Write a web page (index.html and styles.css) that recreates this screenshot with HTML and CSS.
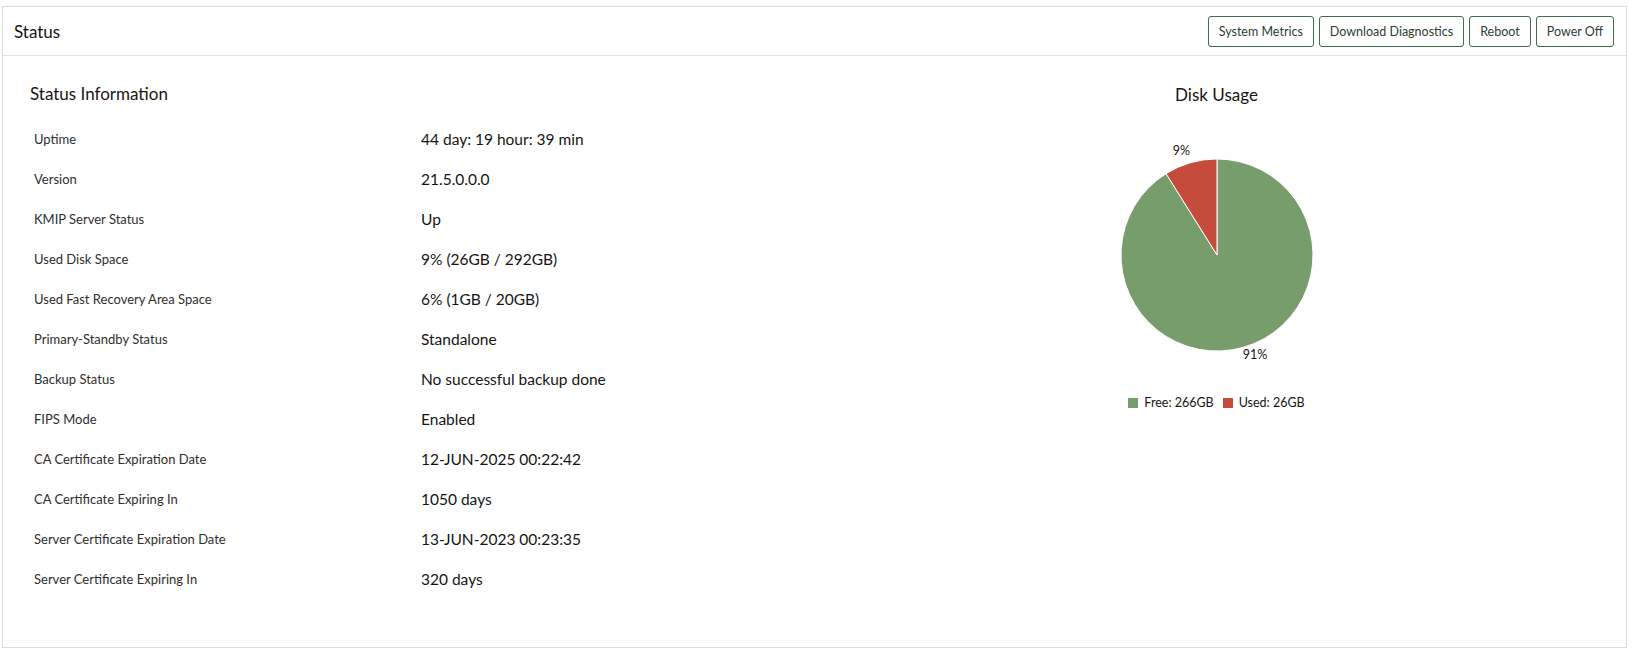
FILE: index.html
```html
<!DOCTYPE html>
<html>
<head>
<meta charset="utf-8">
<link rel="stylesheet" href="styles.css">
</head>
<body>
<div class="panel">
  <div class="panel-header">
    <div class="panel-title">Status</div>
    <div class="actions">
      <button class="btn">System Metrics</button>
      <button class="btn">Download Diagnostics</button>
      <button class="btn">Reboot</button>
      <button class="btn">Power Off</button>
    </div>
  </div>
  <div class="panel-body">
    <div class="info">
      <h2 class="section-title">Status Information</h2>
      <div class="rows">
        <div class="row"><span class="label">Uptime</span><span class="value">44 day: 19 hour: 39 min</span></div>
        <div class="row"><span class="label">Version</span><span class="value">21.5.0.0.0</span></div>
        <div class="row"><span class="label">KMIP Server Status</span><span class="value">Up</span></div>
        <div class="row"><span class="label">Used Disk Space</span><span class="value">9% (26GB / 292GB)</span></div>
        <div class="row"><span class="label">Used Fast Recovery Area Space</span><span class="value">6% (1GB / 20GB)</span></div>
        <div class="row"><span class="label">Primary-Standby Status</span><span class="value">Standalone</span></div>
        <div class="row"><span class="label">Backup Status</span><span class="value">No successful backup done</span></div>
        <div class="row"><span class="label">FIPS Mode</span><span class="value">Enabled</span></div>
        <div class="row"><span class="label">CA Certificate Expiration Date</span><span class="value">12-JUN-2025 00:22:42</span></div>
        <div class="row"><span class="label">CA Certificate Expiring In</span><span class="value">1050 days</span></div>
        <div class="row"><span class="label">Server Certificate Expiration Date</span><span class="value">13-JUN-2023 00:23:35</span></div>
        <div class="row"><span class="label">Server Certificate Expiring In</span><span class="value">320 days</span></div>
      </div>
    </div>
    <div class="chart">
      <h2 class="chart-title">Disk Usage</h2>
      <svg class="pie" width="260" height="235" viewBox="0 0 260 235">
        <path d="M130 120 L130 24 A96 96 0 1 1 79.06 38.63 Z" fill="#769d6b" stroke="#ffffff" stroke-width="1"/>
        <path d="M130 120 L79.06 38.63 A96 96 0 0 1 130 24 Z" fill="#c54b3c" stroke="#ffffff" stroke-width="1"/>
        <text x="94.5" y="20" class="pie-label" text-anchor="middle">9%</text>
        <text x="168" y="224" class="pie-label" text-anchor="middle">91%</text>
      </svg>
      <div class="legend">
        <span class="legend-item"><span class="swatch free"></span>Free: 266GB</span>
        <span class="legend-item"><span class="swatch used"></span>Used: 26GB</span>
      </div>
    </div>
  </div>
</div>
</body>
</html>
```

FILE: styles.css
```css
html, body {
  margin: 0;
  padding: 0;
  background: #ffffff;
}
body {
  padding: 6px 5px 2px 2px;
  font-family: Lato, "Noto Sans", sans-serif;
  color: #161513;
}
.panel {
  border: 1px solid #dcdcdc;
  height: 640px;
  display: flex;
  flex-direction: column;
}
.panel-header {
  height: 48px;
  border-bottom: 1px solid #e3e3e3;
  display: flex;
  align-items: center;
  justify-content: space-between;
  padding: 0 12px 0 11px;
}
.panel-title {
  font-size: 17px;
  color: #161513;
}
.actions {
  display: flex;
  gap: 5px;
}
.btn {
  height: 31px;
  padding: 0 10px;
  border: 1px solid #3f6b4e;
  border-radius: 3px;
  background: #ffffff;
  color: #2c3d33;
  font-family: Lato, "Noto Sans", sans-serif;
  font-size: 12.5px;
}
.panel-body {
  display: grid;
  grid-template-columns: 1fr 1fr;
  padding: 0 14px 0 27px;
}
.section-title {
  margin: 26px 0 13px;
  font-size: 17px;
  font-weight: normal;
  line-height: 24px;
}
.row {
  display: flex;
  align-items: center;
  height: 40px;
  padding-left: 4px;
}
.label {
  width: 387px;
  flex: none;
  font-size: 13px;
  color: #2f2e2c;
}
.value {
  font-size: 15.5px;
  color: #161513;
}
.chart {
  display: flex;
  flex-direction: column;
  align-items: center;
}
.chart-title {
  margin: 27px 0 28px;
  font-size: 17px;
  font-weight: normal;
  line-height: 24px;
}
.pie {
  display: block;
}
.pie-label {
  font-family: Lato, "Noto Sans", sans-serif;
  font-size: 12.5px;
  fill: #161513;
}
.legend {
  display: flex;
  gap: 9px;
  margin-top: 25px;
  font-size: 12.5px;
  color: #161513;
}
.legend-item {
  display: flex;
  align-items: center;
  gap: 6px;
}
.swatch {
  width: 10px;
  height: 10px;
  display: inline-block;
}
.swatch.free { background: #769d6b; }
.swatch.used { background: #c54b3c; }
```
